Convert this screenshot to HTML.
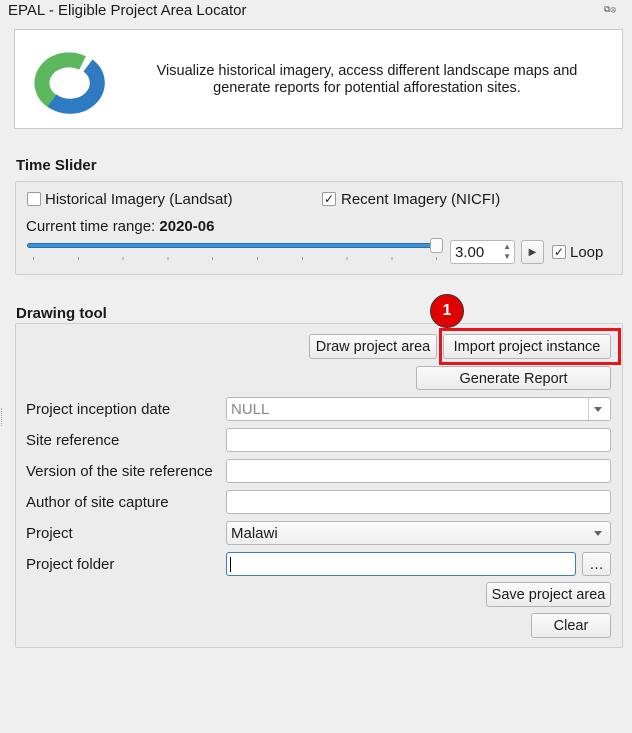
<!DOCTYPE html>
<html><head><meta charset="utf-8"><style>
*{box-sizing:border-box}
body{margin:0;width:632px;height:733px;background:#efefef;font-family:"Liberation Sans",sans-serif;font-size:15px;color:#1a1a1a;position:relative;overflow:hidden}
.a{position:absolute;white-space:nowrap}
.box{position:absolute;border:1px solid #cfcfcf;border-radius:2px;background:#ececec}
.btn{position:absolute;border:1px solid #b4b4b4;border-radius:3px;background:linear-gradient(#fafafa,#ececec);text-align:center;font-size:14.5px;line-height:24px}
.in{position:absolute;border:1px solid #b8b8b8;border-radius:3px;background:#fff;height:24px;font-size:15px;line-height:23px;padding-left:4px}
.cb{position:absolute;width:14px;height:14px;border:1px solid #999;background:#fff;border-radius:2px;font-size:12px;line-height:12px;text-align:center}
.arr{position:absolute;right:8px;top:9px;width:0;height:0;border-left:4px solid transparent;border-right:4px solid transparent;border-top:5px solid #666}
.l{position:absolute;white-space:nowrap;left:26px}
</style></head><body>
<div class="a" style="left:8px;top:2px;font-size:15px">EPAL - Eligible Project Area Locator</div>
<div class="a" style="left:604px;top:4px;font-size:9px;color:#555">⧉⊗</div>
<div style="position:absolute;left:14px;top:29px;width:609px;height:100px;background:#fff;border:1px solid #c8c8c8"></div>
<svg class="a" style="left:0;top:0" width="140" height="140">
<path d="M82.5 63 A27 23 0 1 0 55.5 103" fill="none" stroke="#5cb85c" stroke-width="15"/>
<path d="M88 65.5 A27 23 0 0 1 52 100.5" fill="none" stroke="#2f7bc1" stroke-width="15"/>
</svg>
<div class="a" style="left:137px;top:63px;width:460px;text-align:center;white-space:normal;line-height:17px;font-size:14.5px">Visualize historical imagery, access different landscape maps and generate reports for potential afforestation sites.</div>

<div class="a" style="left:16px;top:157px;font-weight:bold">Time Slider</div>
<div class="box" style="left:15px;top:181px;width:608px;height:94px"></div>
<div class="cb" style="left:27px;top:192px"></div>
<div class="a" style="left:45px;top:191px">Historical Imagery (Landsat)</div>
<div class="cb" style="left:322px;top:192px">✓</div>
<div class="a" style="left:341px;top:191px">Recent Imagery (NICFI)</div>
<div class="a" style="left:26px;top:218px">Current time range: <b>2020-06</b></div>
<div style="position:absolute;left:27px;top:243px;width:410px;height:5px;background:#3d93d9;border:1px solid #2a6fa8;border-radius:3px"></div>
<div style="position:absolute;left:430px;top:238px;width:13px;height:15px;background:#fafafa;border:1px solid #aaa;border-radius:3px"></div>
<div style="position:absolute;left:33px;top:257px;width:404px;height:3px;background:repeating-linear-gradient(90deg,#999 0 1px,transparent 1px 44.8px)"></div>
<div class="in" style="left:450px;top:240px;width:65px;height:24px">3.00<span style="position:absolute;right:3px;top:1px;font-size:8px;line-height:10px;color:#666">▲<br>▼</span></div>
<div class="btn" style="left:521px;top:240px;width:23px;height:24px;font-size:10px;color:#444">▶</div>
<div class="cb" style="left:552px;top:245px">✓</div>
<div class="a" style="left:570px;top:244px">Loop</div>

<div class="a" style="left:16px;top:305px;font-weight:bold">Drawing tool</div>
<div class="box" style="left:15px;top:323px;width:608px;height:325px"></div>
<div class="btn" style="left:309px;top:334px;width:128px;height:25px">Draw project area</div>
<div class="btn" style="left:443px;top:334px;width:168px;height:25px">Import project instance</div>
<div style="position:absolute;left:439px;top:328px;width:182px;height:37px;border:3px solid #e8141c"></div>
<div style="position:absolute;left:430px;top:294px;width:34px;height:34px;border-radius:50%;background:#e00000;border:1px solid #333;color:#fff;font-weight:bold;font-size:16px;text-align:center;line-height:31px">1</div>
<div class="btn" style="left:416px;top:366px;width:195px;height:24px">Generate Report</div>

<div class="l" style="top:401px">Project inception date</div>
<div class="in" style="left:226px;top:397px;width:385px;color:#888">NULL<span style="position:absolute;right:0;top:0;width:22px;height:22px;border-left:1px solid #ccc"></span><span class="arr"></span></div>
<div class="l" style="top:432px">Site reference</div>
<div class="in" style="left:226px;top:428px;width:385px"></div>
<div class="l" style="top:463px">Version of the site reference</div>
<div class="in" style="left:226px;top:459px;width:385px"></div>
<div class="l" style="top:494px">Author of site capture</div>
<div class="in" style="left:226px;top:490px;width:385px"></div>
<div class="l" style="top:525px">Project</div>
<div class="in" style="left:226px;top:521px;width:385px;background:linear-gradient(#fafafa,#efefef)">Malawi<span class="arr"></span></div>
<div class="l" style="top:556px">Project folder</div>
<div class="in" style="left:226px;top:552px;width:350px;border-color:#3d7fb8"><span style="position:absolute;left:3px;top:4px;width:1px;height:15px;background:#000"></span></div>
<div class="btn" style="left:582px;top:552px;width:29px;height:24px">…</div>
<div class="btn" style="left:486px;top:582px;width:125px;height:25px">Save project area</div>
<div class="btn" style="left:531px;top:613px;width:80px;height:25px">Clear</div>
<div style="position:absolute;left:1px;top:408px;width:1px;height:18px;border-left:1px dotted #aaa"></div>
</body></html>
